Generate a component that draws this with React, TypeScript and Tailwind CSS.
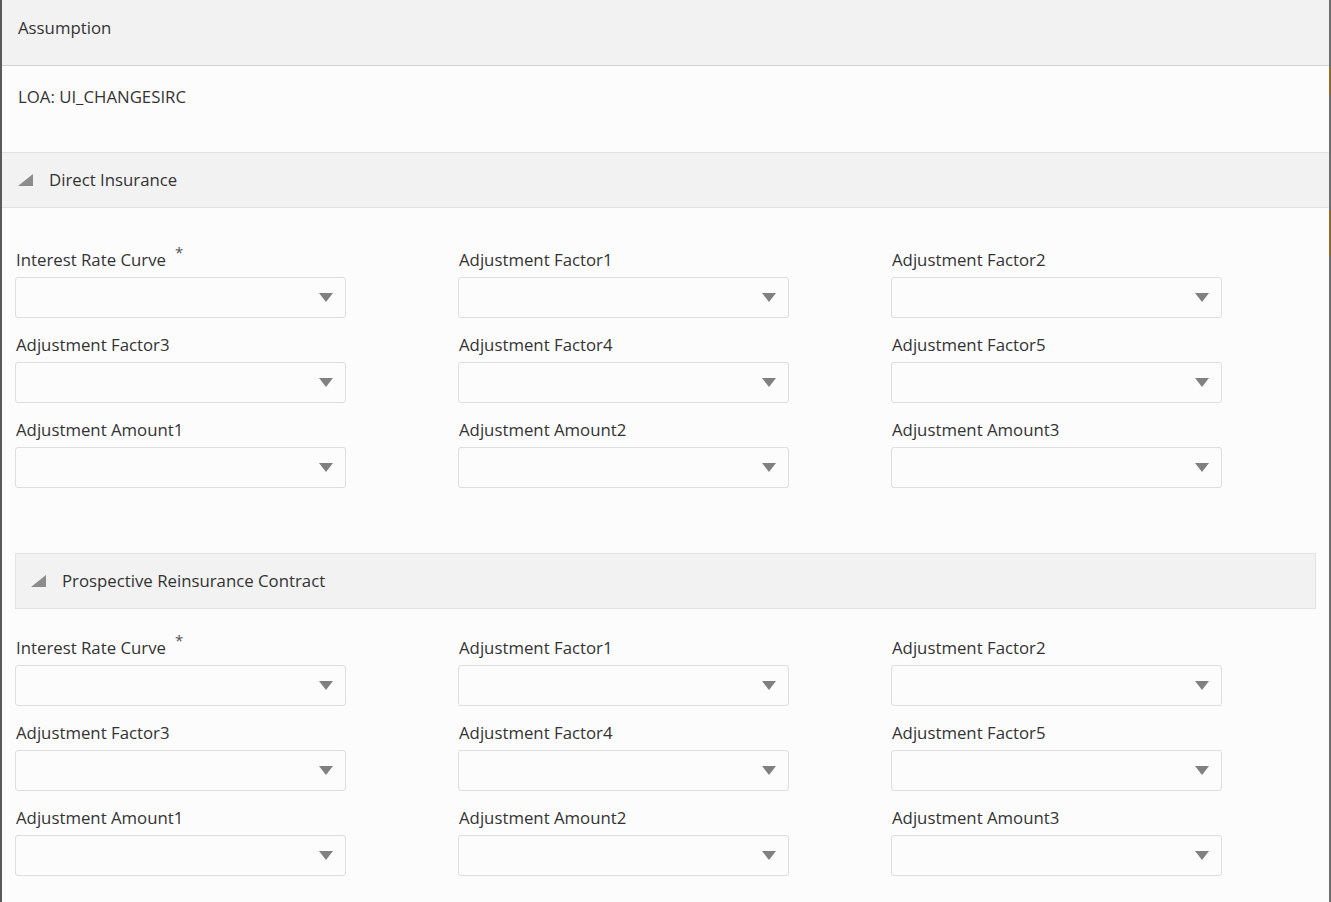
import React from 'react'

const fields = [
  { label: 'Interest Rate Curve', required: true },
  { label: 'Adjustment Factor1' },
  { label: 'Adjustment Factor2' },
  { label: 'Adjustment Factor3' },
  { label: 'Adjustment Factor4' },
  { label: 'Adjustment Factor5' },
  { label: 'Adjustment Amount1' },
  { label: 'Adjustment Amount2' },
  { label: 'Adjustment Amount3' },
]

function Caret() {
  return (
    <svg width="16" height="16" viewBox="0 0 16 16" className="shrink-0">
      <path d="M16 2 L16 14 L1 14 Z" fill="#8c8c8c" />
    </svg>
  )
}

function Select({ label, required }: { label: string; required?: boolean }) {
  return (
    <div className="flex flex-col">
      <div className="h-[20px] leading-[20px] pl-[1px] text-[16.8px] text-[#333] flex">
        <span>{label}</span>
        {required && <span className="ml-[9px] -mt-[8px] text-[15px] text-[#555]">*</span>}
      </div>
      <div className="mt-[7px] h-[41px] w-[331px] rounded-[3px] border border-[#dedede] bg-[#fcfcfc] flex items-center justify-end pr-[12px]">
        <svg width="14" height="9" viewBox="0 0 14 9">
          <path d="M0 0 H14 L7 9 Z" fill="#808080" />
        </svg>
      </div>
    </div>
  )
}

function FieldGrid() {
  return (
    <div className="grid grid-cols-[443px_433px_1fr] gap-y-[17px] px-[13px]">
      {fields.map(f => (
        <Select key={f.label} label={f.label} required={f.required} />
      ))}
    </div>
  )
}

export default function App() {
  return (
    <div
      className="w-[1331px] h-[902px] overflow-hidden flex bg-[#fcfcfc] text-[#333]"
      style={{ fontFamily: '"Open Sans", "Noto Sans", sans-serif' }}
    >
      <div className="w-[2px] bg-[#5a5a5a] shrink-0" />
      <div className="flex-1 flex flex-col">
        <div className="h-[66px] bg-[#f2f2f2] border-b border-[#d2d2d2] pl-[16px] pt-[15px] text-[16.8px]">
          Assumption
        </div>
        <div className="h-[86px] pl-[16px] pt-[18px] text-[16.8px]">LOA: UI_CHANGESIRC</div>
        <div className="h-[56px] bg-[#f2f2f2] border-y border-[#e3e3e3] flex items-center pl-[15px] text-[16.8px]">
          <Caret />
          <span className="ml-[16px]">Direct Insurance</span>
        </div>
        <div className="pt-[42px]">
          <FieldGrid />
        </div>
        <div className="ml-[13px] mr-[13px] mt-[65px] h-[56px] bg-[#f2f2f2] border border-[#e3e3e3] flex items-center pl-[14px] text-[16.8px]">
          <Caret />
          <span className="ml-[16px]">Prospective Reinsurance Contract</span>
        </div>
        <div className="pt-[29px]">
          <FieldGrid />
        </div>
      </div>
      <div className="w-[2px] shrink-0 flex flex-col bg-[#6e6e6e]">
        <div className="h-[67px]" />
        <div className="h-[28px] bg-[#8a6a30]" />
        <div className="h-[115px]" />
        <div className="h-[46px] bg-[#8a6a30]" />
      </div>
    </div>
  )
}
